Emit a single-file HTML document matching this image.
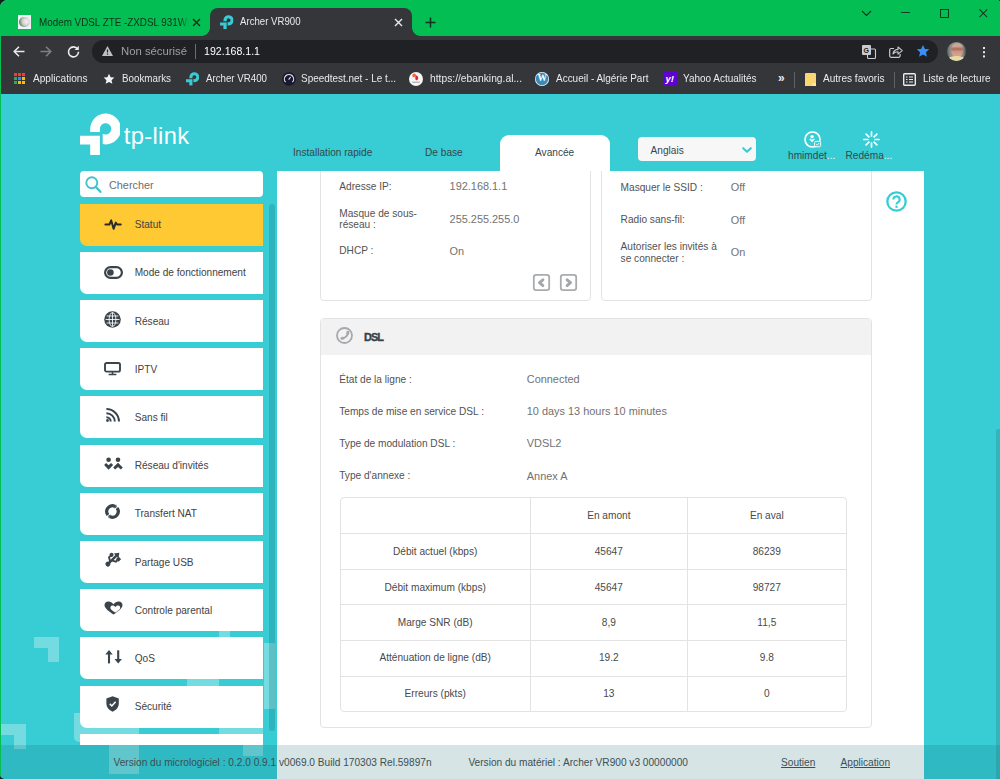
<!DOCTYPE html>
<html lang="fr">
<head>
<meta charset="utf-8">
<title>Archer VR900</title>
<style>
*{box-sizing:border-box;margin:0;padding:0}
html,body{width:1000px;height:779px;overflow:hidden;background:#1b1b1b}
body{font-family:"Liberation Sans",Arial,sans-serif;font-size:11px;color:#4a4a4a;position:relative}
.abs{position:absolute}
#win{position:absolute;left:0;top:0;width:1000px;height:779px;border-radius:8px 3px 3px 5px;overflow:hidden;background:#03be52}
/* ---------- browser chrome ---------- */
#tabstrip{position:absolute;left:0;top:0;width:1000px;height:36px;background:#03be52}
#toolbar{position:absolute;left:0;top:36px;width:1000px;height:30px;background:#35363a}
#bmbar{position:absolute;left:0;top:66px;width:1000px;height:28px;background:#35363a}
.ui{font-family:"Liberation Sans",sans-serif;font-size:10.5px;color:#e8eaed;white-space:nowrap;position:absolute}
#tab2{position:absolute;left:210px;top:8px;width:202px;height:28px;background:#35363a;border-radius:8px 8px 0 0}
#tab2:before,#tab2:after{content:"";position:absolute;bottom:0;width:8px;height:8px}
#tab2:before{left:-8px;background:radial-gradient(circle at 0 0,transparent 7.5px,#35363a 8px)}
#tab2:after{right:-8px;background:radial-gradient(circle at 100% 0,transparent 7.5px,#35363a 8px)}
#omni{position:absolute;left:92px;top:4px;width:846px;height:23px;border-radius:11.5px;background:#202124}

.ui.dk{color:#12301c}
.sep{position:absolute;width:1px;height:16px;background:#5f6368;top:6px}
svg{position:absolute;overflow:visible}
/* ---------- page ---------- */
#page{position:absolute;left:0;top:0;width:1000px;height:779px;background:#38ccd5;overflow:hidden}
#content{position:absolute;left:277px;top:171px;width:647px;height:608px;background:#fff}
.p{position:absolute;margin-top:0.8px;white-space:nowrap;font-size:10.13px;line-height:12px;color:#525252}
.p.v{color:#727272;font-size:10.92px;margin-top:0.2px}
.card{position:absolute;border:1px solid #e3e3e3;border-radius:4px;background:#fff}
.mi{position:absolute;left:79.7px;width:183.8px;height:42.1px;background:#fff;border-radius:0 0 0 7px}
.mi.sel{background:#ffc933}
.ml{position:absolute;margin-top:1px;left:134.7px;white-space:nowrap;font-size:10.1px;line-height:12px;color:#424242}
.tc{position:absolute;margin-top:0.8px;white-space:nowrap;font-size:10.13px;line-height:12px;color:#4a4a4a;transform:translateX(-50%)}
.hl{position:absolute;left:340px;width:506px;height:1px;background:#e3e3e3}
.vl{position:absolute;top:497px;width:1px;height:214px;background:#e3e3e3}

</style>
</head>
<body>
<div class="abs" style="left:990px;top:769px;width:10px;height:10px;background:#03be52"></div>
<div id="win">
<svg width="0" height="0" style="left:0;top:0"><defs>
<symbol id="tpmark" viewBox="0 0 40 42"><path d="M10.2 19V16A15.4 15.4 0 1 1 22.7 31.1V20.8A5.7 5.7 0 1 0 19.9 16V19Z"/><path d="M0 22.7H19.9V41.9H10.2V31.5H0Z"/></symbol>
</defs></svg>
<div id="page">
  <!--DECOR-->
  <div class="abs" style="left:34.0px;top:637.0px;width:25.0px;height:11.0px;background:rgba(255,255,255,0.3);"></div>
  <div class="abs" style="left:48.0px;top:648.0px;width:11.0px;height:14.4px;background:rgba(255,255,255,0.3);"></div>
  <div class="abs" style="left:1.0px;top:724.0px;width:25.2px;height:11.2px;background:rgba(255,255,255,0.3);"></div>
  <div class="abs" style="left:14.2px;top:735.2px;width:12.0px;height:13.4px;background:rgba(255,255,255,0.3);"></div>
  <div class="abs" style="left:218.7px;top:625.0px;width:11.5px;height:12.0px;background:rgba(255,255,255,0.3);"></div>
  <div class="abs" style="left:186.5px;top:672.0px;width:32.9px;height:13.5px;background:rgba(255,255,255,0.3);"></div>
  <div class="abs" style="left:263.5px;top:643.0px;width:11.5px;height:65.5px;background:rgba(255,255,255,0.3);"></div>
  <div class="abs" style="left:74.0px;top:712.6px;width:65.3px;height:21.0px;background:rgba(255,255,255,0.3);"></div>
  <div class="abs" style="left:74.0px;top:733.6px;width:35.4px;height:8.4px;background:rgba(255,255,255,0.3);border-radius:0 0 0 5px"></div>
  <div class="abs" style="left:109.4px;top:733.6px;width:29.9px;height:40.4px;background:rgba(255,255,255,0.3);"></div>
  <div class="abs" style="left:218.7px;top:720.0px;width:44.8px;height:13.6px;background:rgba(255,255,255,0.3);"></div>
  <div class="abs" style="left:242.8px;top:733.6px;width:20.7px;height:22.1px;background:rgba(255,255,255,0.3);"></div>
  <div id="content"></div>
  <!--HEADER-->
  <svg style="left:79.8px;top:112.5px" width="40" height="42" viewBox="0 0 40 42"><use href="#tpmark" fill="#fff"/></svg>
  <div class="abs" id="h_logo" style="left:123.8px;top:121px;letter-spacing:0.35px;font-size:23.7px;line-height:30px;color:#fff;white-space:nowrap">tp-link</div>
  <div class="p" id="h_n1" style="left:293px;top:146.5px;color:#36474a">Installation rapide</div>
  <div class="p" id="h_n2" style="left:425px;top:146.5px;color:#36474a">De base</div>
  <div class="abs" style="left:499.5px;top:135px;width:110.5px;height:37px;background:#fff;border-radius:9px 9px 0 0"></div>
  <div class="p" id="h_n3" style="left:535px;top:146.5px;color:#36474a">Avancée</div>
  <div class="abs" style="left:637.5px;top:137px;width:118.5px;height:24px;background:#f7f7f7;border-radius:4px"></div>
  <div class="p" id="h_lang" style="left:650.5px;top:144px;color:#36474a">Anglais</div>
  <svg style="left:742.3px;top:147px" width="10" height="7" viewBox="0 0 10 7"><path d="M1.2 1.2L5 4.8L8.8 1.2" stroke="#38ccd5" stroke-width="2.1" fill="none" stroke-linecap="round" stroke-linejoin="round"/></svg>
  <!-- user icon -->
  <svg style="left:804.3px;top:131.3px" width="17" height="17" viewBox="0 0 17 17"><circle cx="8.5" cy="8.5" r="7.5" fill="none" stroke="#fff" stroke-width="1.7"/><circle cx="8.1" cy="5.6" r="1.7" fill="#fff"/><path d="M5.3 8.2L6.4 7.5L8.1 8.8L9.8 7.5L10.9 8.2L8.1 11.3Z" fill="#fff"/><rect x="10.6" y="10.4" width="6" height="5.4" rx="1.2" fill="#38ccd5" stroke="#fff" stroke-width="1"/><path d="M12.2 13.1L13.3 14.2L15.2 12" fill="none" stroke="#fff" stroke-width="0.9"/></svg>
  <div class="p" id="h_user" style="left:788px;top:149px;color:#36474a">hmimdet<span style="color:#fff">...</span></div>
  <!-- reboot icon -->
  <svg style="left:862.7px;top:130.9px" width="17" height="17" viewBox="-8.5 -8.5 17 17"><g stroke="#fff" stroke-width="1.7" stroke-linecap="round"><path d="M0 -3.6V-7.6"/><path d="M0 3.6V7.6"/><path d="M-3.6 0H-7.6"/><path d="M3.6 0H7.6"/><path d="M2.6 -2.6L5.4 -5.4"/><path d="M-2.6 2.6L-5.4 5.4"/><path d="M-2.6 -2.6L-5.4 -5.4"/><path d="M2.6 2.6L5.4 5.4"/></g></svg>
  <div class="p" id="h_reb" style="left:845.5px;top:149px;color:#36474a">Redéma<span style="color:#fff">...</span></div>
  <!-- help -->
  <svg style="left:886.2px;top:191.4px" width="21" height="21" viewBox="0 0 21 21"><circle cx="10.5" cy="10.5" r="9.2" fill="none" stroke="#38ccd5" stroke-width="2.3"/><path d="M7.4 8.6A3.1 3.1 0 1 1 11.9 11.3C10.9 11.9 10.5 12.3 10.5 13.4" fill="none" stroke="#38ccd5" stroke-width="2.1"/><circle cx="10.5" cy="15.7" r="1.25" fill="#38ccd5"/></svg>
  <!--SIDEBAR-->
  <div class="abs" style="left:269.3px;top:203.6px;width:5.8px;height:527.5px;background:rgba(20,90,100,0.22);border-radius:3px"></div>
  <div class="abs" style="left:80px;top:171px;width:182.5px;height:26px;background:#fff;border-radius:4px"></div>
  <svg style="left:85px;top:176px" width="17" height="17" viewBox="0 0 17 17"><circle cx="6.8" cy="6.8" r="5.5" fill="none" stroke="#3fc3cc" stroke-width="1.9"/><path d="M10.9 11.1L15.4 15.8" stroke="#3fc3cc" stroke-width="2.3" stroke-linecap="round"/></svg>
  <div class="p" id="s_search" style="left:109px;top:178.5px;color:#6e6e6e;font-size:10.85px">Chercher</div>
  <div class="mi sel" style="top:203.6px"></div>
  <svg style="left:104px;top:217.1px" width="18" height="14" viewBox="0 0 18 14"><path d="M1.4 7.5H5.4L7.2 3.4L9.6 11.8L11.8 5.6L13 7.5H16.8" fill="none" stroke="#2b2b2b" stroke-width="2" stroke-linejoin="round" stroke-linecap="round"/></svg>
  <div class="ml" id="m1" style="top:218.1px">Statut</div>
  <div class="mi" style="top:251.8px"></div>
  <svg style="left:103.5px;top:265.8px" width="19" height="13" viewBox="0 0 19 13"><rect x="1.1" y="1.1" width="16.8" height="10.8" rx="5.4" fill="none" stroke="#3b444b" stroke-width="2.2"/><circle cx="6.4" cy="6.5" r="3.3" fill="#3b444b"/></svg>
  <div class="ml" id="m2" style="top:266.3px">Mode de fonctionnement</div>
  <div class="mi" style="top:300.0px"></div>
  <svg style="left:104.4px;top:310.8px" width="17" height="17" viewBox="0 0 17 17"><circle cx="8.5" cy="8.5" r="8.3" fill="#3b444b"/><g fill="none" stroke="#fff" stroke-width="0.85"><ellipse cx="8.5" cy="8.5" rx="3.4" ry="7"/><path d="M8.5 1.5V15.5M1.5 8.5H15.5M2.6 5H14.4M2.6 12H14.4"/></g></svg>
  <div class="ml" id="m3" style="top:314.5px">Réseau</div>
  <div class="mi" style="top:348.2px"></div>
  <svg style="left:103.7px;top:361.6px" width="17" height="13.4" viewBox="0 0 17 13.4"><rect x="1" y="1" width="15" height="8.6" rx="1.6" fill="none" stroke="#3b444b" stroke-width="1.9"/><path d="M8.5 10V12.2M4.6 12.5H12.4" stroke="#3b444b" stroke-width="1.6" fill="none"/></svg>
  <div class="ml" id="m4" style="top:362.7px">IPTV</div>
  <div class="mi" style="top:396.4px"></div>
  <svg style="left:106.2px;top:408.4px" width="14" height="14" viewBox="0 0 14 14"><g fill="none" stroke="#3b444b" stroke-width="2"><path d="M0.4 1A12.6 12.6 0 0 1 13 13.6"/><path d="M0.4 5.2A8.4 8.4 0 0 1 8.8 13.6"/><path d="M0.4 9.3A4.3 4.3 0 0 1 4.7 13.6"/></g><circle cx="1.5" cy="12.5" r="1.4" fill="#3b444b"/></svg>
  <div class="ml" id="m5" style="top:410.9px">Sans fil</div>
  <div class="mi" style="top:444.6px"></div>
  <svg style="left:0;top:0" width="1000" height="779" viewBox="0 0 1000 779"><g fill="#3b444b" transform="translate(0 0.6)"><circle cx="108.6" cy="459.2" r="2.3"/><circle cx="118" cy="459.2" r="2.3"/><path d="M104.1 464.5L106.1 462.4L108.6 464.7L111.1 462.4L113.1 464.5L108.6 469.2Z"/><path d="M118 462.2L122.8 467L120.9 469L118 466.4L115.1 469L113.2 467Z"/></g></svg>
  <div class="ml" id="m6" style="top:459.1px">Réseau d'invités</div>
  <div class="mi" style="top:492.8px"></div>
  <svg style="left:103.7px;top:503.4px" width="17" height="17" viewBox="-8.5 -8.5 17 17"><g fill="none" stroke="#3b444b" stroke-width="3.2"><path d="M-4.49 3.51A5.7 5.7 0 0 1 2.68 -5.03"/><path d="M4.49 -3.51A5.7 5.7 0 0 1 -2.68 5.03"/></g><path d="M3.7 -7.1L1.6 -3L4.3 -4.3Z M-3.7 7.1L-1.6 3L-4.3 4.3Z" fill="#3b444b"/></svg>
  <div class="ml" id="m7" style="top:507.3px">Transfert NAT</div>
  <div class="mi" style="top:541.0px"></div>
  <svg style="left:104px;top:551.3px" width="17" height="17" viewBox="0 0 17 17"><g transform="rotate(45 8.5 8.5)"><circle cx="8.5" cy="15" r="2.5" fill="#3b444b"/><path d="M8.5 14V2.6" stroke="#3b444b" stroke-width="2.3"/><path d="M8.5 -1.2L11.8 3.4H5.2Z" fill="#3b444b"/><path d="M8.5 11.8L4.5 9.4V6.6" fill="none" stroke="#3b444b" stroke-width="1.9"/><circle cx="4.5" cy="5.8" r="2" fill="#3b444b"/><path d="M8.5 9.8L12.5 7.6V5.4" fill="none" stroke="#3b444b" stroke-width="1.9"/><rect x="10.7" y="2.2" width="3.7" height="3.7" fill="#3b444b"/></g></svg>
  <div class="ml" id="m8" style="top:555.5px">Partage USB</div>
  <div class="mi" style="top:589.2px"></div>
  <svg style="left:103.8px;top:601.4px" width="19" height="14" viewBox="0 0 19 14"><path d="M9.5 13.6C4 9.8 0.5 7.2 0.5 4.1A3.6 3.6 0 0 1 4.3 0.4C6.5 0.4 8.4 1.5 9.5 3.2C10.6 1.5 12.5 0.4 14.7 0.4A3.6 3.6 0 0 1 18.5 4.1C18.5 7.2 15 9.8 9.5 13.6Z" fill="#3b444b"/><path d="M11.3 11.6C8.2 9.6 6.4 8.3 6.4 6.7A2.1 2.1 0 0 1 8.6 4.6C9.7 4.6 10.7 5.2 11.3 6.1C11.9 5.2 12.9 4.6 14 4.6A2.1 2.1 0 0 1 16.2 6.7C16.2 8.3 14.4 9.6 11.3 11.6Z" fill="#fff"/></svg>
  <div class="ml" id="m9" style="top:603.7px">Controle parental</div>
  <div class="mi" style="top:637.4px"></div>
  <svg style="left:104.5px;top:650.2px" width="17" height="14" viewBox="0 0 17 14"><g fill="none" stroke="#3b444b" stroke-width="2.1"><path d="M4 13.4V3"/><path d="M13.2 0.3V10.6"/></g><path d="M4 0L7.7 4.6H0.3Z M13.2 13.6L16.9 9H9.5Z" fill="#3b444b"/></svg>
  <div class="ml" id="m10" style="top:651.9px">QoS</div>
  <div class="mi" style="top:685.6px"></div>
  <svg style="left:106.2px;top:696.2px" width="13.2" height="16" viewBox="0 0 14 17"><path d="M7 0.3L13.6 2.6V8C13.6 12 10.8 15 7 16.7C3.2 15 0.4 12 0.4 8V2.6Z" fill="#3b444b"/><path d="M4 8.4L6.2 10.6L10.2 6.2" fill="none" stroke="#fff" stroke-width="1.6"/></svg>
  <div class="ml" id="m11" style="top:700.1px">Sécurité</div>
  <div class="mi" style="top:733.6px;height:11.4px;border-radius:0"></div>
  <!--CARDS-->
  <div class="abs" style="left:277px;top:171px;width:647px;height:140px;overflow:hidden">
    <div class="card" style="left:43px;top:-40px;width:270.5px;height:170px"></div>
    <div class="card" style="left:324px;top:-40px;width:271px;height:170px"></div>
  </div>
  <div class="p" id="c_ip" style="left:339.3px;top:179.8px;">Adresse IP:</div>
  <div class="p v" id="c_ipv" style="left:449.6px;top:179.8px;">192.168.1.1</div>
  <div class="p" id="c_mk1" style="left:339.3px;top:206.8px;">Masque de sous-</div>
  <div class="p" id="c_mk2" style="left:339.3px;top:218.4px;">réseau :</div>
  <div class="p v" id="c_mkv" style="left:449.6px;top:212.7px;">255.255.255.0</div>
  <div class="p" id="c_dh" style="left:339.3px;top:244.6px;">DHCP :</div>
  <div class="p v" id="c_dhv" style="left:449.6px;top:244.6px;">On</div>
  <svg style="left:533.2px;top:273.8px" width="17" height="17" viewBox="0 0 17 17"><rect x="0.8" y="0.8" width="15.4" height="15.4" rx="2.4" fill="#fff" stroke="#a9abae" stroke-width="1.8"/><path d="M9.9 5.8L6.5 8.7L9.9 11.6" fill="none" stroke="#a4a6a9" stroke-width="2.9" stroke-linecap="round" stroke-linejoin="round"/></svg>
  <svg style="left:560px;top:273.8px" width="17" height="17" viewBox="0 0 17 17"><rect x="0.8" y="0.8" width="15.4" height="15.4" rx="2.4" fill="#fff" stroke="#a9abae" stroke-width="1.8"/><path d="M7.1 5.8L10.5 8.7L7.1 11.6" fill="none" stroke="#a4a6a9" stroke-width="2.9" stroke-linecap="round" stroke-linejoin="round"/></svg>
  <div class="p" id="c_ss" style="left:620.6px;top:181.0px;">Masquer le SSID :</div>
  <div class="p v" id="c_ssv" style="left:730.7px;top:181.0px;">Off</div>
  <div class="p" id="c_ra" style="left:620.6px;top:213.4px;">Radio sans-fil:</div>
  <div class="p v" id="c_rav" style="left:730.7px;top:213.4px;">Off</div>
  <div class="p" id="c_au1" style="left:620.6px;top:240.0px;">Autoriser les invités à</div>
  <div class="p" id="c_au2" style="left:620.6px;top:251.8px;">se connecter :</div>
  <div class="p v" id="c_auv" style="left:730.7px;top:245.8px;">On</div>
  <div class="card" style="left:320px;top:318px;width:552px;height:409.5px;overflow:hidden"><div class="abs" style="left:0;top:0;width:552px;height:36px;background:#f2f2f2"></div></div>
  <svg style="left:336.1px;top:327.1px" width="17" height="17" viewBox="0 0 17 17"><circle cx="8.5" cy="8.5" r="7.5" fill="none" stroke="#a7a9ac" stroke-width="1.8"/><path d="M11.9 5.2C11.8 8.4 9.4 10.9 5.9 11.4" fill="none" stroke="#a7a9ac" stroke-width="1.9" stroke-linecap="round"/><path d="M11.9 5.2L11.8 6.6M5.9 11.4L7.2 11.1" stroke="#a7a9ac" stroke-width="2.9" stroke-linecap="round"/></svg>
  <div class="p" id="d_t" style="left:364.0px;top:330.0px;font-weight:bold;color:#36444b;font-size:10.9px;letter-spacing:-0.9px;-webkit-text-stroke:0.4px #36444b">DSL</div>
  <div class="p" id="d_l1" style="left:339.2px;top:372.8px;">État de la ligne :</div>
  <div class="p v" id="d_v1" style="left:526.8px;top:372.8px;">Connected</div>
  <div class="p" id="d_l2" style="left:339.2px;top:404.8px;">Temps de mise en service DSL :</div>
  <div class="p v" id="d_v2" style="left:526.8px;top:404.8px;">10 days 13 hours 10 minutes</div>
  <div class="p" id="d_l3" style="left:339.2px;top:437.0px;">Type de modulation DSL :</div>
  <div class="p v" id="d_v3" style="left:526.8px;top:437.0px;">VDSL2</div>
  <div class="p" id="d_l4" style="left:339.2px;top:469.6px;">Type d'annexe :</div>
  <div class="p v" id="d_v4" style="left:526.8px;top:469.6px;">Annex A</div>
  <div class="abs" style="left:340px;top:497px;width:507px;height:215px;border:1px solid #e3e3e3;border-radius:4px"></div>
  <div class="hl" style="top:533.2px"></div>
  <div class="hl" style="top:569.2px"></div>
  <div class="hl" style="top:604.4px"></div>
  <div class="hl" style="top:640.0px"></div>
  <div class="hl" style="top:675.6px"></div>
  <div class="vl" style="left:530.0px"></div>
  <div class="vl" style="left:687px"></div>
  <div class="tc" id="r0b" style="left:608.8px;top:509.6px">En amont</div>
  <div class="tc" id="r0c" style="left:766.8px;top:509.6px">En aval</div>
  <div class="tc" id="r1a" style="left:435.2px;top:545.2px">Débit actuel (kbps)</div>
  <div class="tc" id="r1b" style="left:608.8px;top:545.2px">45647</div>
  <div class="tc" id="r1c" style="left:766.8px;top:545.2px">86239</div>
  <div class="tc" id="r2a" style="left:435.2px;top:580.8px">Débit maximum (kbps)</div>
  <div class="tc" id="r2b" style="left:608.8px;top:580.8px">45647</div>
  <div class="tc" id="r2c" style="left:766.8px;top:580.8px">98727</div>
  <div class="tc" id="r3a" style="left:435.2px;top:616.4px">Marge SNR (dB)</div>
  <div class="tc" id="r3b" style="left:608.8px;top:616.4px">8,9</div>
  <div class="tc" id="r3c" style="left:766.8px;top:616.4px">11,5</div>
  <div class="tc" id="r4a" style="left:435.2px;top:651.6px">Atténuation de ligne (dB)</div>
  <div class="tc" id="r4b" style="left:608.8px;top:651.6px">19.2</div>
  <div class="tc" id="r4c" style="left:766.8px;top:651.6px">9.8</div>
  <div class="tc" id="r5a" style="left:435.2px;top:687.2px">Erreurs (pkts)</div>
  <div class="tc" id="r5b" style="left:608.8px;top:687.2px">13</div>
  <div class="tc" id="r5c" style="left:766.8px;top:687.2px">0</div>
  <!--FOOTER-->
  <div class="abs" style="left:0;top:745px;width:1000px;height:34px;background:rgba(0,90,100,0.16)"></div>
  <div class="p" id="f_1" style="left:113.5px;top:756.0px;color:#3d4f52">Version du micrologiciel : 0.2.0 0.9.1 v0069.0 Build 170303 Rel.59897n</div>
  <div class="p" id="f_2" style="left:468.4px;top:756.0px;color:#3d4f52">Version du matériel : Archer VR900 v3 00000000</div>
  <div class="p" id="f_3" style="left:781.0px;top:756.0px;color:#3d4f52;text-decoration:underline">Soutien</div>
  <div class="p" id="f_4" style="left:840.5px;top:756.0px;color:#3d4f52;text-decoration:underline">Application</div>
</div>
<div id="tabstrip">
  <div class="abs" style="left:17.5px;top:15.4px;width:13.7px;height:13.5px;background:#f4f1f6"><div class="abs" style="left:1.6px;top:1.4px;width:10.6px;height:10.6px;border-radius:50%;background:radial-gradient(circle at 68% 45%,#f7eeee 0,#eadfe0 25%,#b9cbbd 50%,#5f8a70 75%,#2f5f45 100%)"></div></div>
  <div class="abs" style="left:39px;top:16px;width:151px;height:14px;overflow:hidden;-webkit-mask-image:linear-gradient(90deg,#000 141px,transparent 150px)"><div class="ui dk" id="t_tab1" style="transform:scaleX(0.9376);transform-origin:0 50%;left:0;top:0">Modem VDSL ZTE -ZXDSL 931WIi</div></div>
  <svg style="left:192px;top:18px" width="9" height="9" viewBox="0 0 9 9"><path d="M1 1L8 8M8 1L1 8" stroke="#12301c" stroke-width="1.4" fill="none"/></svg>
  <div id="tab2"></div>
  <svg style="left:219.5px;top:15.1px" width="13.4" height="14" viewBox="0 0 40 42"><use href="#tpmark" fill="#38ccd5"/></svg>
  <div class="ui" id="t_tab2" style="transform:scaleX(0.9173);transform-origin:0 50%;left:240px;top:15px">Archer VR900</div>
  <svg style="left:394px;top:18px" width="9" height="9" viewBox="0 0 9 9"><path d="M1 1L8 8M8 1L1 8" stroke="#e8eaed" stroke-width="1.4" fill="none"/></svg>
  <svg style="left:425px;top:17px" width="11" height="11" viewBox="0 0 11 11"><path d="M5.5 0.5V10.5M0.5 5.5H10.5" stroke="#12301c" stroke-width="1.5" fill="none"/></svg>
  <svg style="left:861px;top:10px" width="11" height="7" viewBox="0 0 11 7"><path d="M1 1L5.5 5.5L10 1" stroke="#12301c" stroke-width="1.2" fill="none"/></svg>
  <div class="abs" style="left:901px;top:12px;width:9px;height:1px;background:#103d22"></div>
  <div class="abs" style="left:940px;top:8.5px;width:9.2px;height:9.2px;border:1px solid #103d22"></div>
  <svg style="left:979px;top:8.8px" width="8.6" height="8.6" viewBox="0 0 10 10"><path d="M0.5 0.5L9.5 9.5M9.5 0.5L0.5 9.5" stroke="#103d22" stroke-width="1.3" fill="none"/></svg>
</div>
<div id="toolbar"><div id="omni"></div>
  <svg style="left:13px;top:10px" width="12" height="11" viewBox="0 0 12 11"><path d="M6 0.8L1.2 5.5L6 10.2M1.2 5.5H11.5" stroke="#e8eaed" stroke-width="1.5" fill="none"/></svg>
  <svg style="left:40px;top:10px" width="12" height="11" viewBox="0 0 12 11"><path d="M6 0.8L10.8 5.5L6 10.2M10.8 5.5H0.5" stroke="#7d8084" stroke-width="1.5" fill="none"/></svg>
  <svg style="left:67px;top:9px" width="13" height="13" viewBox="0 0 13 13"><path d="M10.6 4A5 5 0 1 0 11.5 6.8" stroke="#e8eaed" stroke-width="1.6" fill="none"/><path d="M11.8 0.8V5H7.6Z" fill="#e8eaed"/></svg>
  <svg style="left:102px;top:10px" width="11" height="10" viewBox="0 0 11 10"><path d="M5.5 0L11 10H0Z" fill="#bdc1c6"/><path d="M5.5 3.6V6.6M5.5 7.6V8.8" stroke="#202124" stroke-width="1.2"/></svg>
  <div class="ui" id="t_nonsec" style="transform:scaleX(0.9832);transform-origin:0 50%;left:121px;top:9.3px;color:#9aa0a6;font-size:11.5px">Non sécurisé</div>
  <div class="abs" style="left:195px;top:8px;width:1px;height:15px;background:#6b6f74"></div>
  <div class="ui" id="t_url" style="transform:scaleX(0.9216);transform-origin:0 50%;left:204px;top:9.3px;font-size:11.5px;color:#fff">192.168.1.1</div>
  <!-- translate -->
  <svg style="left:862px;top:9px" width="14" height="14" viewBox="0 0 14 14"><rect x="0" y="0" width="9" height="10" rx="1" fill="#c8cbcf"/><rect x="5.5" y="4" width="8" height="9.5" rx="1" fill="none" stroke="#c8cbcf" stroke-width="1.1"/><text x="1.6" y="7.6" font-family="Liberation Sans,sans-serif" font-size="7" font-weight="bold" fill="#202124">G</text></svg>
  <!-- share -->
  <svg style="left:889px;top:9px" width="14" height="13" viewBox="0 0 14 13"><path d="M5 3.5H2.2A1.5 1.5 0 0 0 0.7 5V10.8A1.5 1.5 0 0 0 2.2 12.3H9.6A1.5 1.5 0 0 0 11.1 10.8V9" stroke="#c8cbcf" stroke-width="1.2" fill="none"/><path d="M4 9C4.3 6 6 4.6 9 4.4V2L13.3 5.6L9 9.2V6.8C6.8 6.8 5.2 7.4 4 9Z" fill="none" stroke="#c8cbcf" stroke-width="1.1" stroke-linejoin="round"/></svg>
  <svg style="left:916px;top:8px" width="14" height="14" viewBox="0 0 24 24"><path d="M12 1.5l3.2 6.9 7.5.8-5.6 5.1 1.6 7.4L12 17.9 5.3 21.7l1.6-7.4L1.3 9.2l7.5-.8z" fill="#3a8ff7"/></svg>
  <div class="abs" style="left:947.3px;top:5.6px;width:19px;height:19px;border-radius:50%;overflow:hidden;background:linear-gradient(90deg,#5d5f5c 0,#8d8f8a 18%,#8d8f8a 82%,#4e5a55 100%)"><div class="abs" style="left:3.5px;top:1px;width:12px;height:15px;border-radius:45% 45% 50% 50%;background:linear-gradient(180deg,#b9aba4 0,#d3a592 22%,#a9695e 40%,#cf917f 55%,#d6a48f 80%,#c99a86 100%)"></div><div class="abs" style="left:1px;top:14.5px;width:17px;height:6px;border-radius:50% 50% 0 0;background:#e4dca4"></div></div>
  <div class="abs" style="left:982.5px;top:10.6px;width:2.5px;height:2.5px;background:#e8eaed;box-shadow:0 4.2px 0 #e8eaed,0 8.4px 0 #e8eaed"></div>
</div>
<div id="bmbar">
  <div class="abs" style="left:14px;top:7px;width:3px;height:3px;background:#ea4335;box-shadow:4px 0 0 #ea4335,8px 0 0 #ea4335,0 4px 0 #34a853,4px 4px 0 #4285f4,8px 4px 0 #fbbc04,0 8px 0 #34a853,4px 8px 0 #fbbc04,8px 8px 0 #fbbc04"></div>
  <div class="ui" id="b_app" style="transform:scaleX(0.9625);transform-origin:0 50%;left:33px;top:6.4px">Applications</div>
  <svg style="left:102.8px;top:6.6px" width="12" height="12" viewBox="0 0 24 24"><path d="M12 1.5l3.2 6.9 7.5.8-5.6 5.1 1.6 7.4L12 17.9 5.3 21.7l1.6-7.4L1.3 9.2l7.5-.8z" fill="#f1f3f4"/></svg>
  <div class="ui" id="b_bm" style="transform:scaleX(0.9331);transform-origin:0 50%;left:122px;top:6.4px">Bookmarks</div>
  <svg style="left:186px;top:6.2px" width="13" height="13.65" viewBox="0 0 40 42"><use href="#tpmark" fill="#38ccd5"/></svg>
  <div class="ui" id="b_vr" style="transform:scaleX(0.9249);transform-origin:0 50%;left:206px;top:6.4px">Archer VR400</div>
  <svg style="left:281.6px;top:5.6px" width="14" height="14" viewBox="0 0 14 14"><circle cx="7" cy="7" r="6.8" fill="#171a30"/><path d="M3.6 10.2A4.6 4.6 0 1 1 10.4 10.2" stroke="#dfe1e8" stroke-width="1.2" fill="none"/><path d="M6.6 7.6L8.6 5" stroke="#dfe1e8" stroke-width="1.1"/></svg>
  <div class="ui" id="b_sp" style="transform:scaleX(0.9462);transform-origin:0 50%;left:301px;top:6.4px">Speedtest.net - Le t...</div>
  <svg style="left:409.4px;top:5.8px" width="14" height="14" viewBox="0 0 14 14"><circle cx="7" cy="7" r="7" fill="#f6f6f6"/><circle cx="5.2" cy="3.4" r="1.9" fill="#f26b3a"/><path d="M7.6 3.2C9.6 4.6 9.8 7.4 7.8 8.2C5.9 8.2 5.6 5.6 7.6 3.2Z" fill="#d7263d"/><path d="M3.2 10.2H10.8" stroke="#9a9a9a" stroke-width="1"/></svg>
  <div class="ui" id="b_eb" style="transform:scaleX(0.9789);transform-origin:0 50%;left:430px;top:6.4px">https://ebanking.al...</div>
  <div class="abs" style="left:535px;top:6px;width:14px;height:14px;border-radius:50%;background:#3b8ab8;box-shadow:inset 0 0 0 0.8px #e6eef3"></div>
  <div class="ui" style="left:537.6px;top:7px;font-size:9.5px;font-weight:bold;color:#fff;font-family:'Liberation Serif',serif">W</div>
  <div class="ui" id="b_wp" style="transform:scaleX(0.9490);transform-origin:0 50%;left:556px;top:6.4px">Accueil - Algérie Part</div>
  <div class="abs" style="left:663px;top:6px;width:14px;height:13.5px;background:#5f01d1"></div>
  <div class="ui" style="left:665.5px;top:6.5px;font-size:9.5px;font-weight:bold;font-style:italic;color:#fff">y!</div>
  <div class="ui" id="b_ya" style="transform:scaleX(0.9490);transform-origin:0 50%;left:683px;top:6.4px">Yahoo Actualités</div>
  <div class="ui" style="left:778px;top:5px;font-size:12px;font-weight:bold">»</div>
  <div class="sep" style="left:794px"></div>
  <svg style="left:805px;top:7px" width="11" height="14" viewBox="0 0 11 14"><path d="M0 1.2A1.2 1.2 0 0 1 1.2 0H9.8A1.2 1.2 0 0 1 11 1.2V13H0Z" fill="#f9d671"/><path d="M7.5 10H11V13H7.5Z" fill="#fde9a6"/></svg>
  <div class="ui" id="b_af" style="transform:scaleX(0.9579);transform-origin:0 50%;left:823px;top:6.4px">Autres favoris</div>
  <div class="sep" style="left:894px"></div>
  <svg style="left:903px;top:7px" width="13" height="13" viewBox="0 0 13 13"><rect x="0.7" y="0.7" width="11.6" height="11.6" rx="1" fill="none" stroke="#e8eaed" stroke-width="1.4"/><path d="M3 4H4.5M6 4H10M3 6.5H4.5M6 6.5H10M3 9H4.5M6 9H10" stroke="#e8eaed" stroke-width="1.2"/></svg>
  <div class="ui" id="b_ll" style="transform:scaleX(0.9478);transform-origin:0 50%;left:923px;top:6.4px">Liste de lecture</div>
</div>
<div class="abs" style="left:996.2px;top:428.8px;width:4px;height:351px;background:rgba(40,90,100,0.2);border-radius:2px 0 0 0"></div>
<div class="abs" style="left:0;top:0;width:1.1px;height:779px;background:#03be52"></div>
</div>
</body>
</html>
